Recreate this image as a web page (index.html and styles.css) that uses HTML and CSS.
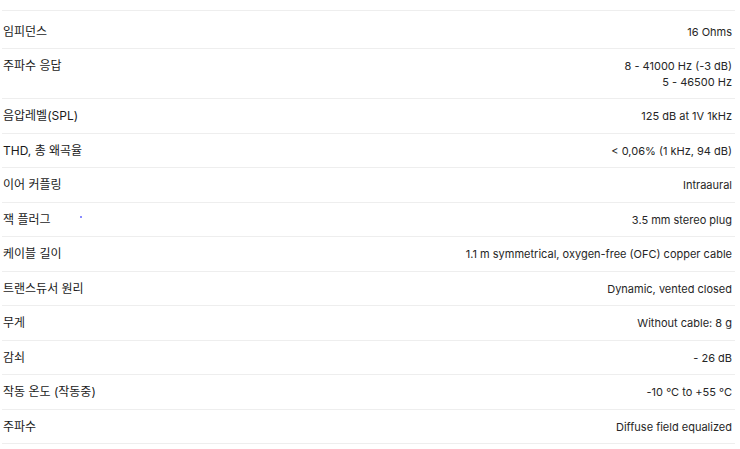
FILE: index.html
```html
<!DOCTYPE html>
<html lang="ko">
<head>
    <meta charset="UTF-8">
    <meta name="viewport" content="width=device-width, initial-scale=1.0">
    <title>Specs</title>
    <link rel="stylesheet" href="styles.css">
</head>
<body>
<!-- Spec table -->
<div class="specs">
    <div class="row first">
        <div class="label">임피던스</div>
        <div class="value">16 Ohms</div>
    </div>
    <div class="row double">
        <div class="label">주파수 응답</div>
        <div class="value">8 - 41000 Hz (-3 dB)<br>5 - 46500 Hz</div>
    </div>
    <div class="row">
        <div class="label">음압레벨(SPL)</div>
        <div class="value">125 dB at 1V 1kHz</div>
    </div>
    <div class="row">
        <div class="label">THD, 총 왜곡율</div>
        <div class="value">&lt; 0,06% (1 kHz, 94 dB)</div>
    </div>
    <div class="row">
        <div class="label">이어 커플링</div>
        <div class="value">Intraaural</div>
    </div>
    <div class="row">
        <div class="label">잭 플러그<span class="dot"></span></div>
        <div class="value">3.5 mm stereo plug</div>
    </div>
    <div class="row">
        <div class="label">케이블 길이</div>
        <div class="value">1.1 m symmetrical, oxygen-free (OFC) copper cable</div>
    </div>
    <div class="row">
        <div class="label">트랜스듀서 원리</div>
        <div class="value">Dynamic, vented closed</div>
    </div>
    <div class="row">
        <div class="label">무게</div>
        <div class="value">Without cable: 8 g</div>
    </div>
    <div class="row">
        <div class="label">감쇠</div>
        <div class="value">- 26 dB</div>
    </div>
    <div class="row">
        <div class="label">작동 온도 (작동중)</div>
        <div class="value">-10 °C to +55 °C</div>
    </div>
    <div class="row">
        <div class="label">주파수</div>
        <div class="value">Diffuse field equalized</div>
    </div>
</div>
</body>
</html>
```

FILE: styles.css
```css
/* Basic page styling */
body {
margin: 0;background: #fff;
font-family: Inter, "Noto Sans CJK KR", sans-serif;color: #222;
}
/* Spec list */
.specs {
margin: 10px 5px 0 2px;border-top: 1px solid #eeeeee;
}
.row {
display: flex;justify-content: space-between;align-items: flex-start;
padding: 9px 3px 8.5px 1px;line-height: 16px;
border-bottom: 1px solid #eeeeee;
}
.row.first {
padding-top: 13px;padding-bottom: 8px;
}
.row.double {
padding-bottom: 8px;
}
.label {
position: relative;font-size: 12px;color: #1a1a1a;
}
.value {
text-align: right;font-size: 11px;color: #262626;
}
/* stray pixel in the picture */
.dot {
position: absolute;left: 77px;top: 4px;width: 2px;height: 2px;background: #8a8cff;
}
```
